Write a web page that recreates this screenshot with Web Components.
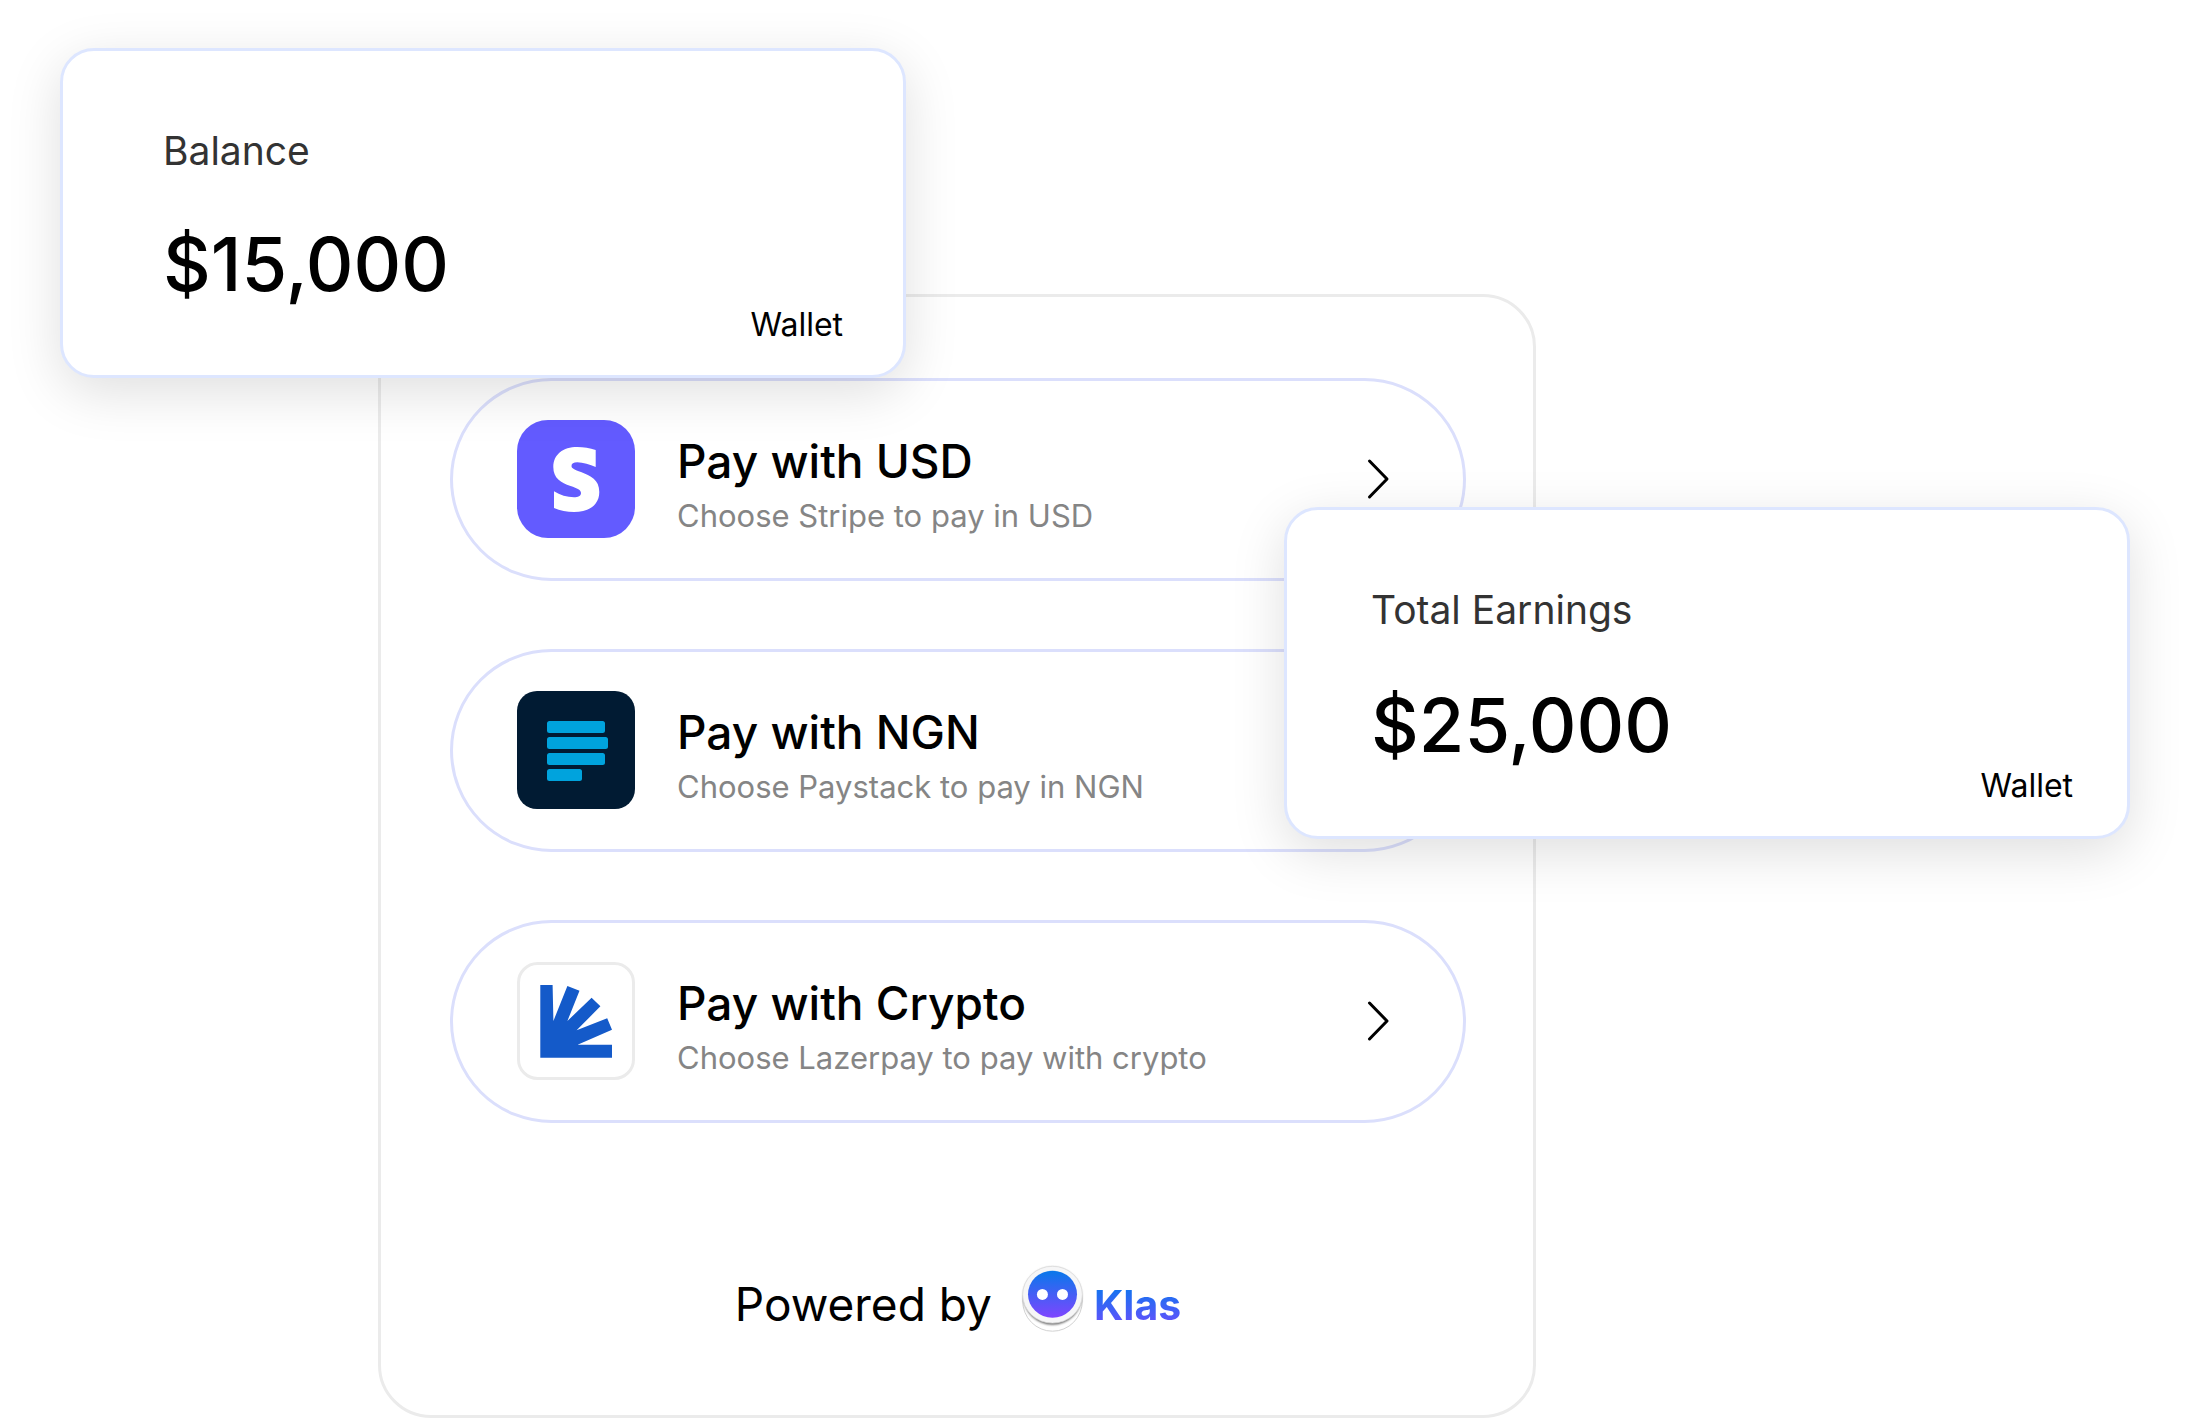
<!DOCTYPE html>
<html lang="en">
<head>
<meta charset="utf-8">
<meta name="viewport" content="width=device-width, initial-scale=1">
<title>Klas payments</title>
<style>
  body { margin: 0; background: #fff; color: #000; font-family: Inter, "Liberation Sans", sans-serif; }
</style>
</head>
<body>
<klas-showcase></klas-showcase>

<script>
  const define = (name, html) => {
    const template = document.createElement('template');
    template.innerHTML = html;
    customElements.define(name, class extends HTMLElement {
      constructor() {
        super();
        this.attachShadow({ mode: 'open' }).append(template.content.cloneNode(true));
      }
    });
  };

  define('wallet-card', `
    <style>
      :host { display: block; box-sizing: border-box; width: min(846px, 90%); padding: 76px 60px 30px 100px;
        background: #fff; border: 3px solid #dde6ff; border-radius: 34px; box-shadow: 0 14px 54px rgba(0,0,0,.13); }
      section { display: flex; flex-direction: column; }
      h2 { margin: 0; font-size: 39px; line-height: 48px; font-weight: 400; color: #333; }
      .amount { margin: var(--amount-gap, 48px) 0 0; font-size: 74px; line-height: 82px; font-weight: 500; }
      .kind { align-self: flex-end; margin: 0; font-size: 32px; line-height: 40px; }
    </style>
    <section>
      <h2><slot name="label"></slot></h2>
      <p class="amount"><slot></slot></p>
      <p class="kind"><slot name="kind"></slot></p>
    </section>`);

  define('pay-option', `
    <style>
      :host { display: block; }
      button { display: flex; align-items: center; gap: 42px; width: 100%; height: 203px; margin: 0; padding: 0 73px 2px 64px;
        background: none; border: 3px solid #dbdffc; border-radius: 102px; font: inherit; color: inherit; text-align: left; cursor: pointer; }
      .icon { display: flex; flex: none; }
      .text { display: flex; flex-direction: column; flex: 1; gap: 8px; padding-top: 12px; }
      .title { font-size: 46px; line-height: 54px; font-weight: 500; }
      .note { font-size: 31px; line-height: 40px; color: #858585; }
      .chevron { flex: none; }
    </style>
    <button type="button">
      <span class="icon"><slot name="icon"></slot></span>
      <span class="text">
        <span class="title"><slot></slot></span>
        <span class="note"><slot name="note"></slot></span>
      </span>
      <svg class="chevron" width="24" height="42" viewBox="0 0 24 42" fill="none" stroke="#000" stroke-width="3" stroke-linecap="round" stroke-linejoin="round" aria-hidden="true"><path d="M3.5 3 L21 21 L3.5 39"/></svg>
    </button>`);

  define('stripe-mark', `
    <style>:host { display: block; } svg { display: block; }</style>
    <svg width="118" height="118" viewBox="0 0 118 118" aria-hidden="true">
      <rect width="118" height="118" rx="31" fill="#635bff"/>
      <path fill="#fff" d="M78.7 30C73 28 66.5 27 60.3 27C46 27 36.3 34.5 36.3 47C36.3 58.5 44 62.7 53.5 66C60.5 68.3 64 70 64 73C64 76 61 77.3 57 77.3C50 77.3 43 75 37 71.3V88C43 90.7 50 92 57 92C72 92 82.3 85 82.3 72C82.3 59.5 73.5 55.7 64 52C57.5 49.6 54.5 48.5 54.5 46C54.5 43.5 56.5 42.3 60.3 42.3C66 42.3 73 44.5 78.7 47Z"/>
    </svg>`);

  define('paystack-mark', `
    <style>:host { display: block; } svg { display: block; }</style>
    <svg width="118" height="118" viewBox="0 0 118 118" aria-hidden="true">
      <rect width="118" height="118" rx="20" fill="#011b33"/>
      <g fill="#00a3dd">
        <rect x="30" y="30" width="58" height="12" rx="2.5"/>
        <rect x="30" y="46" width="61" height="12" rx="2.5"/>
        <rect x="30" y="62" width="58" height="12" rx="2.5"/>
        <rect x="30" y="78" width="35" height="12" rx="2.5"/>
      </g>
    </svg>`);

  define('lazerpay-mark', `
    <style>:host { display: block; } svg { display: block; }</style>
    <svg width="118" height="118" viewBox="0 0 118 118" aria-hidden="true">
      <rect x="1.5" y="1.5" width="115" height="115" rx="19" fill="#fff" stroke="#ebebeb" stroke-width="3"/>
      <path fill="#145ac9" d="M23.3 23H35.6L36.4 59L50.4 24L62.5 28.7L50.4 59L74.6 35.7L83.4 44.3L59.6 68.3L90.2 56.3L95 67.7L60.6 82.7H95V95.7H23.3Z"/>
    </svg>`);

  define('klas-brand', `
    <style>
      :host { display: flex; gap: 8px; }
      svg { display: block; flex: none; }
      b { margin-top: 14px; font-size: 41px; line-height: 54px; font-weight: 700; color: transparent;
        background: linear-gradient(#0a78ee 12%, #7a47ff 100%); -webkit-background-clip: text; background-clip: text; }
    </style>
    <svg width="66" height="70" viewBox="0 0 66 70" aria-hidden="true">
      <defs>
        <linearGradient id="face" x1="0" y1="0" x2="0" y2="1"><stop offset="0" stop-color="#0878ea"/><stop offset="1" stop-color="#7f45ff"/></linearGradient>
        <filter id="soft" x="-10%" y="-10%" width="120%" height="120%"><feGaussianBlur stdDeviation="0.8"/></filter>
      </defs>
      <ellipse cx="32.5" cy="37" rx="29.8" ry="30.2" fill="#fff" stroke="#d2d2d2"/>
      <ellipse cx="32.5" cy="32" rx="29.2" ry="28.7" fill="#666" filter="url(#soft)"/>
      <ellipse cx="32.5" cy="30.7" rx="29.8" ry="28.4" fill="#f6f6f7" stroke="#dcdcdc" stroke-width=".8"/>
      <ellipse cx="32.5" cy="30.2" rx="24.5" ry="23.5" fill="url(#face)"/>
      <circle cx="22.4" cy="30.4" r="5.5" fill="#fff"/><circle cx="42.5" cy="30.4" r="5.5" fill="#fff"/>
    </svg>
    <b><slot></slot></b>`);

  define('pay-panel', `
    <style>
      :host { display: block; box-sizing: border-box; padding: 81px 67px 81px 69px; border: 3px solid #ebebeb; border-radius: 53px; }
      .options { display: flex; flex-direction: column; gap: 68px; }
      footer { display: flex; justify-content: center; gap: 28px; margin-top: 141px; }
      .by { margin-top: 13px; font-size: 46px; line-height: 54px; }
    </style>
    <div class="options"><slot></slot></div>
    <footer><span class="by">Powered by</span><klas-brand>Klas</klas-brand></footer>`);

  define('klas-showcase', `
    <style>
      :host { display: block; position: relative; overflow: hidden; }
      main { display: grid; grid-template-columns: 378fr 1158fr 652fr; padding-top: 294px; }
      pay-panel { grid-column: 2; }
      wallet-card { position: absolute; }
      .balance { top: 48px; left: 60px; }
      .earnings { top: 507px; right: 58px; padding-left: 84px; padding-right: 54px; --amount-gap: 50px; }
    </style>
    <main>
      <pay-panel>
        <pay-option><stripe-mark slot="icon"></stripe-mark>Pay with USD<span slot="note">Choose Stripe to pay in USD</span></pay-option>
        <pay-option><paystack-mark slot="icon"></paystack-mark>Pay with NGN<span slot="note">Choose Paystack to pay in NGN</span></pay-option>
        <pay-option><lazerpay-mark slot="icon"></lazerpay-mark>Pay with Crypto<span slot="note">Choose Lazerpay to pay with crypto</span></pay-option>
      </pay-panel>
      <wallet-card class="balance"><span slot="label">Balance</span>$15,000<span slot="kind">Wallet</span></wallet-card>
      <wallet-card class="earnings"><span slot="label">Total Earnings</span>$25,000<span slot="kind">Wallet</span></wallet-card>
    </main>`);
</script>
</body>
</html>
